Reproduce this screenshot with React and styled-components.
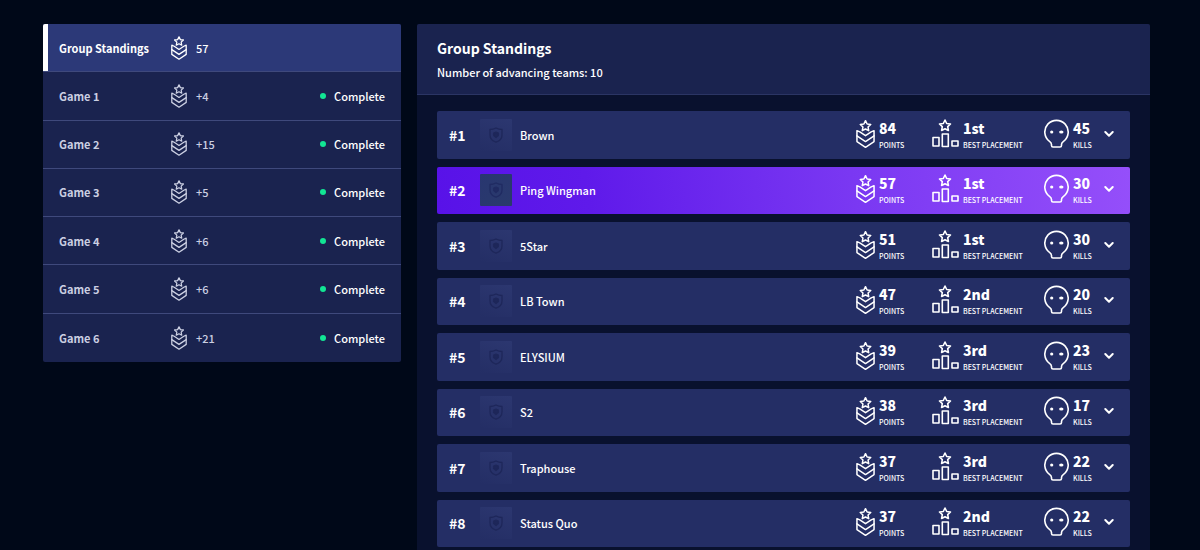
import React from "react";
import styled, { createGlobalStyle, css } from "styled-components";

const GlobalStyle = createGlobalStyle`
  * { box-sizing: border-box; }
  body {
    margin: 0;
    background: #000818;
    color: #fff;
    font-family: "Noto Sans CJK SC", "Noto Sans", sans-serif;
    font-size: 11px;
    font-weight: 500;
    line-height: 20px;
  }
  h1, h2, p, ul, ol { margin: 0; padding: 0; }
  ul, ol { list-style: none; }
  button { font: inherit; color: inherit; border: 0; background: none; padding: 0; cursor: pointer; }
`;

const Page = styled.main`
  display: grid;
  grid-template-columns: minmax(0, 358fr) minmax(0, 733fr);
  gap: 16px;
  min-height: 100vh;
  padding: 24px 50px 0 43px;
`;

const GameList = styled.ul`
  display: grid;
  grid-auto-rows: 1fr;
  align-self: start;
  min-height: 338px;
  border-radius: 2px;
  overflow: hidden;
  background: #1a234f;
`;

const GameItem = styled.li`
  display: flex;
  &:not(:last-child) { border-bottom: 1px solid #3f497c; }
`;

const GameButton = styled.button`
  display: grid;
  grid-template-columns: 112px 25px 1fr auto;
  align-items: center;
  width: 100%;
  padding: 0 16px 0 11px;
  text-align: left;
  border-left: 5px solid transparent;
  color: #cbcfe2;
  ${(p) => p.$active && css`
    background: #2c3978;
    border-left-color: #fff;
    color: #fff;
  `}
`;

const GameName = styled.span`
  font-weight: 700;
`;

const Status = styled.span`
  display: flex;
  align-items: center;
  gap: 8px;
  color: #fff;
  &::before {
    content: "";
    width: 6px;
    height: 6px;
    border-radius: 50%;
    background: #12e594;
  }
`;

const Panel = styled.section`
  border-radius: 2px 2px 0 0;
  overflow: hidden;
  background: #09112e;
`;

const PanelHeader = styled.header`
  padding: 12px 20px 10px;
  background: #1a234f;
  border-bottom: 1px solid #2b3564;
`;

const Title = styled.h1`
  font-size: 14px;
  line-height: 24px;
  font-weight: 700;
`;

const Subtitle = styled.p`
  line-height: 24px;
`;

const Standings = styled.ol`
  display: grid;
  grid-auto-rows: 1fr;
  gap: 8px;
  min-height: 436px;
  margin: 16px 20px 0;
`;

const TeamRow = styled.li`
  display: grid;
  grid-template-columns: 31px 32px 1fr 76px 112px 60px 14px;
  align-items: center;
  padding: 0 12px;
  border-radius: 2px;
  background: ${(p) => (p.$own ? "linear-gradient(80deg, #5812e8 0%, #5f1aea 22%, #7a38f2 60%, #954ffa 100%)" : "#242e65")};
`;

const Rank = styled.span`
  font-size: 14px;
  font-weight: 700;
`;

const Crest = styled.span`
  display: grid;
  place-items: center;
  height: 32px;
  border-radius: 1px;
  color: ${(p) => (p.$own ? "#202b62" : "#1e275a")};
  background: ${(p) => (p.$own ? "linear-gradient(135deg, #283670, #2a3a6c)" : "linear-gradient(200deg, #2c3770, #242e65)")};
`;

const TeamName = styled.span`
  padding-left: 8px;
`;

const Stat = styled.div`
  display: flex;
  align-items: center;
  gap: 4px;
  padding-bottom: 2px;
`;

const StatText = styled.div`
  display: flex;
  flex-direction: column;
  padding-top: 2px;
  white-space: nowrap;
`;

const Value = styled.span`
  font-size: 14px;
  line-height: 20px;
  font-weight: 900;
`;

const Label = styled.span`
  font-size: 7px;
  line-height: 14px;
  text-transform: uppercase;
`;

const Expand = styled.button`
  display: grid;
  place-items: center start;
  height: 24px;
  margin-bottom: 2px;
`;

const Drawing = styled.svg`
  display: block;
  flex: none;
  fill: none;
  stroke: currentColor;
  stroke-linecap: round;
  stroke-linejoin: round;
`;

const Star = () => (
  <path d="M10 1l1.700 3.500 3.800.5-2.800 2.700.7 3.800L10 9.700l-3.400 1.800.7-3.800L4.500 5l3.800-.5z" />
);

const MedalIcon = ({ small }) => (
  <Drawing width={small ? 16 : 19} height={small ? 24 : 30} viewBox="0 0 20 30" strokeWidth="1.6" aria-hidden="true">
    <Star />
    <path d="M4 12.800L1 11.500V23L10 29l9-6V11.500L16 12.800l-6 4z" />
    <path d="M1 17l9 6 9-6" />
  </Drawing>
);

const PodiumIcon = () => (
  <Drawing width="27" height="30" viewBox="0 0 27 30" strokeWidth="1.6" aria-hidden="true">
    <g transform="translate(3 0)"><Star /></g>
    <path d="M1 18.500h6v8.500H1zM10.300 15h6v12.500h-6zM20 22h6v5h-6z" />
  </Drawing>
);

const SkullIcon = () => (
  <Drawing width="25" height="30" viewBox="0 0 25 30" strokeWidth="1.6" aria-hidden="true">
    <path d="M7.500 25.500Q7.500 23.800 5.500 22.400A11.700 11.700 0 1 1 19.500 22.400Q17.500 23.800 17.500 25.500V26.500Q17.500 28 16 28H9Q7.500 28 7.500 26.500Z" />
    <g fill="currentColor" stroke="none">
      <circle cx="7.700" cy="13" r="1.600" />
      <ellipse cx="17.300" cy="13" rx="2.200" ry="1.600" />
    </g>
  </Drawing>
);

const ShieldIcon = () => (
  <Drawing width="16" height="16" viewBox="0 0 16 16" strokeWidth="1.300" aria-hidden="true">
    <path d="M8 1c2 1 4 1.500 6 1.500V8c0 3.500-2.500 6-6 7.200C4.500 14 2 11.500 2 8V2.500C4 2.500 6 2 8 1z" />
    <path d="M8 5.200l2.400 1v2.400L8 10.500 5.600 8.600V6.200z" fill="currentColor" />
  </Drawing>
);

const ChevronIcon = () => (
  <Drawing width="10" height="8" viewBox="0 0 10 8" strokeWidth="2" aria-hidden="true">
    <path d="M1.300 2L5 5.700 8.700 2" />
  </Drawing>
);

const games = [
  { name: "Group Standings", points: "57" },
  { name: "Game 1", points: "+4", status: "Complete" },
  { name: "Game 2", points: "+15", status: "Complete" },
  { name: "Game 3", points: "+5", status: "Complete" },
  { name: "Game 4", points: "+6", status: "Complete" },
  { name: "Game 5", points: "+6", status: "Complete" },
  { name: "Game 6", points: "+21", status: "Complete" },
];

const teams = [
  { name: "Brown", points: 84, best: "1st", kills: 45 },
  { name: "Ping Wingman", points: 57, best: "1st", kills: 30, own: true },
  { name: "5Star", points: 51, best: "1st", kills: 30 },
  { name: "LB Town", points: 47, best: "2nd", kills: 20 },
  { name: "ELYSIUM", points: 39, best: "3rd", kills: 23 },
  { name: "S2", points: 38, best: "3rd", kills: 17 },
  { name: "Traphouse", points: 37, best: "3rd", kills: 22 },
  { name: "Status Quo", points: 37, best: "2nd", kills: 22 },
];

const TeamStat = ({ icon, value, label }) => (
  <Stat>
    {icon}
    <StatText>
      <Value>{value}</Value>
      <Label>{label}</Label>
    </StatText>
  </Stat>
);

export default function App() {
  return (
    <>
      <GlobalStyle />
      <Page>
        <GameList>
          {games.map((g, i) => (
            <GameItem key={g.name}>
              <GameButton type="button" $active={i === 0}>
                <GameName>{g.name}</GameName>
                <MedalIcon small />
                <span>{g.points}</span>
                {g.status && <Status>{g.status}</Status>}
              </GameButton>
            </GameItem>
          ))}
        </GameList>
        <Panel>
          <PanelHeader>
            <Title>Group Standings</Title>
            <Subtitle>Number of advancing teams: 10</Subtitle>
          </PanelHeader>
          <Standings>
            {teams.map((t, i) => (
              <TeamRow key={t.name} $own={t.own}>
                <Rank>#{i + 1}</Rank>
                <Crest $own={t.own}><ShieldIcon /></Crest>
                <TeamName>{t.name}</TeamName>
                <TeamStat icon={<MedalIcon />} value={t.points} label="Points" />
                <TeamStat icon={<PodiumIcon />} value={t.best} label="Best placement" />
                <TeamStat icon={<SkullIcon />} value={t.kills} label="Kills" />
                <Expand type="button" aria-label={`Show details for ${t.name}`}><ChevronIcon /></Expand>
              </TeamRow>
            ))}
          </Standings>
        </Panel>
      </Page>
    </>
  );
}
